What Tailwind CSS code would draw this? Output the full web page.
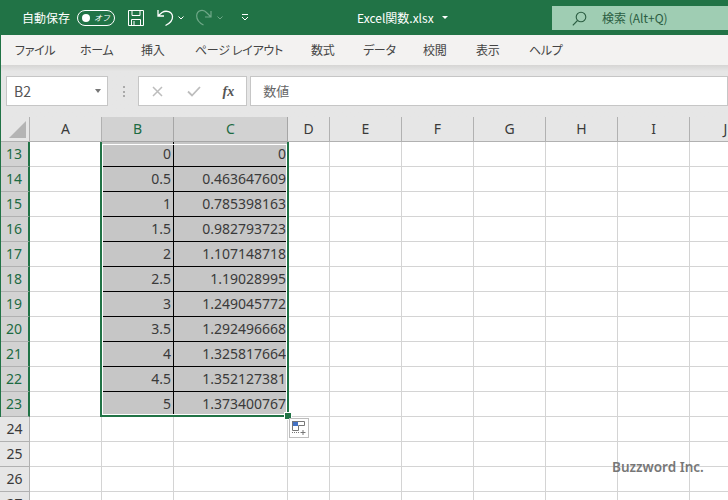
<!DOCTYPE html>
<html lang="ja">
<head>
<meta charset="UTF-8">
<title>Excel関数.xlsx</title>
<script src="https://cdn.jsdelivr.net/npm/@tailwindcss/browser@4"></script>
</head>
<body class="w-[728px] h-[500px] overflow-hidden bg-white font-['Noto_Sans_CJK_JP','Noto_Sans',sans-serif] text-[#444]">

<!-- title bar -->
<header class="h-[35px] bg-[#217346] text-white flex items-center relative">
  <span class="ml-[22px] text-[12px] w-[50px] whitespace-nowrap">自動保存</span>
  <div class="ml-[5px] w-[38px] h-[16px] rounded-full border border-white flex items-center pl-[4px] gap-[4px]">
    <span class="w-[8px] h-[8px] rounded-full bg-white"></span>
    <span class="text-[8px] italic leading-none">オフ</span>
  </div>
  <svg class="ml-[13px]" width="16" height="16" viewBox="0 0 16 16" fill="none" stroke="white" stroke-width="1"><path d="M.5.5h15v15H.5zM4 .5v5h8v-5M3.5 15.5v-6h9v6M6 11v4"/></svg>
  <svg class="ml-[13px]" width="17" height="18" viewBox="0 0 17 18" fill="none" stroke="white" stroke-width="1.3"><path d="M1 1v6h6M1.5 6.5 5 3.500c4-2.500 10-1 10.500 4 .3 4-3 7-7 9"/></svg>
  <svg class="ml-[4px]" width="6" height="4" viewBox="0 0 6 4" fill="none" stroke="white"><path d="M.5.5 3 3 5.500.5"/></svg>
  <svg class="ml-[12px]" width="16" height="18" viewBox="0 0 16 18" fill="none" stroke="#6fa888" stroke-width="1.200"><path d="M15 2v6h-6M14.500 7.500 11 4C7-.5 1 1.500.7 6.500c-.2 4 3 7.500 6.800 9.500"/></svg>
  <svg class="ml-[5px]" width="6" height="4" viewBox="0 0 6 4" fill="none" stroke="#6fa888"><path d="M.5.5 3 3 5.500.5"/></svg>
  <svg class="ml-[18px]" width="8" height="7" viewBox="0 0 8 7" fill="none" stroke="white"><path d="M1 .5h6M1 3l3 3 3-3"/></svg>
  <div class="absolute left-[357px] top-[9px] text-[12px] leading-[17px] whitespace-nowrap flex items-center">Excel関数.xlsx<span class="ml-[8px] border-x-[3px] border-x-transparent border-t-[3px] border-t-white"></span></div>
  <div class="absolute left-[552px] top-[6px] w-[176px] h-[24px] bg-[#9fcdb3] flex items-center text-[#2b5d42] text-[12px]">
    <svg class="ml-[20px]" width="15" height="15" viewBox="0 0 15 15" fill="none" stroke="#2b5d42" stroke-width="1.100"><circle cx="9" cy="6" r="4.800"/><path d="M5.500 9.500 .8 14.300"/></svg>
    <span class="ml-[15px] whitespace-nowrap">検索 (Alt+Q)</span>
  </div>
</header>

<!-- ribbon tabs -->
<nav class="h-[30px] bg-[#f3f2f1] flex items-center text-[12px] text-[#444] whitespace-nowrap tracking-[-0.3px] [font-feature-settings:'palt']">
  <span class="ml-[15px] w-[65px]">ファイル</span>
  <span class="w-[61px]">ホーム</span>
  <span class="w-[54px]">挿入</span>
  <span class="w-[116px]">ページ レイアウト</span>
  <span class="w-[52px]">数式</span>
  <span class="w-[60px]">データ</span>
  <span class="w-[53px]">校閲</span>
  <span class="w-[53px]">表示</span>
  <span>ヘルプ</span>
</nav>

<!-- formula bar -->
<section class="h-[52px] bg-gradient-to-b from-[#d6d5d4] from-0% via-[#e6e6e6] via-[12%] to-[#e6e6e6] flex items-start pt-[11px]">
  <div class="ml-[6px] w-[102px] h-[30px] bg-white border border-[#c6c6c6] flex items-center justify-between pl-[7px] pr-[6px] text-[14px] text-[#555]">
    <span>B2</span>
    <span class="border-x-[3.500px] border-x-transparent border-t-[4px] border-t-[#777]"></span>
  </div>
  <div class="ml-[15px] w-[2px] h-[11px] mt-[10px] border-l-2 border-dotted border-[#aaa]"></div>
  <div class="ml-[13px] w-[110px] h-[30px] bg-white border border-[#c6c6c6] flex items-center">
    <svg class="ml-[13px]" width="11" height="11" viewBox="0 0 11 11" fill="none" stroke="#bdbdbd" stroke-width="1.500"><path d="M1 1l9 9M10 1l-9 9"/></svg>
    <svg class="ml-[24px]" width="14" height="11" viewBox="0 0 14 11" fill="none" stroke="#bdbdbd" stroke-width="1.800"><path d="M1 5.500 5 9.500 13 1"/></svg>
    <span class="ml-[22px] text-[14px] italic font-bold font-['Liberation_Serif',serif] text-[#555]">fx</span>
  </div>
  <div class="ml-[3px] w-[480px] h-[30px] bg-white border border-[#c6c6c6] flex items-center pl-[12px] text-[13px] text-[#666]">数値</div>
</section>

<!-- sheet -->
<main id="sheet" class="text-[14px] leading-none font-['Noto_Sans','Liberation_Sans',sans-serif]"></main>

<span class="absolute left-[612px] top-[457px] text-[13.500px] font-semibold text-[#777] font-['Noto_Sans',sans-serif]">Buzzword Inc.</span>

<script>
  const widths = [72, 72, 114, 42, 72, 72, 72, 72, 72, 72];
  const names = 'ABCDEFGHIJ'.split('');
  const values = [[0, 0], [0.5, 0.463647609], [1, 0.785398163], [1.5, 0.982793723], [2, 1.107148718], [2.5, 1.19028995],
    [3, 1.249045772], [3.5, 1.292496668], [4, 1.325817664], [4.5, 1.352127381], [5, 1.373400767]];
  const sheet = document.getElementById('sheet');
  let html = '<div class="flex h-[25px]"><div class="w-[30px] shrink-0 bg-[#e6e6e6] border-r border-b border-[#b1b1b1] flex items-end justify-end pr-[3px] pb-[3px]"><svg width="17" height="17" viewBox="0 0 17 17"><path d="M17 0V17H0z" fill="#b4b4b4"/></svg></div>';
  names.forEach((n, i) => {
    const sel = i == 1 || i == 2;
    html += `<div class="shrink-0 flex items-center justify-center border-r border-b ${sel ? 'bg-[#d2d2d2] text-[#1d6b43] border-[#a6a6a6]' : 'bg-[#e6e6e6] text-[#3a3a3a] border-[#b1b1b1]'}" style="width:${widths[i]}px">${n}</div>`;
  });
  html += '</div>';
  for (let r = 13; r <= 27; r++) {
    const sel = r <= 23;
    html += `<div class="flex h-[25px] relative"><div class="w-[30px] shrink-0 flex items-center justify-center border-b ${sel ? 'bg-[#d2d2d2] text-[#1d6b43] border-b-[#b1b1b1] border-r-2 border-r-[#217346]' : 'bg-[#e6e6e6] text-[#3a3a3a] border-[#b1b1b1] border-r'}">${r}</div>`;
    widths.forEach((w, i) => {
      if (sel && (i == 1 || i == 2)) {
        const v = values[r - 13][i - 1];
        html += `<div class="shrink-0 flex items-center justify-end pr-[2px] bg-[#c6c6c6] text-[#3a3a3a] border-b border-b-black ${i == 1 ? 'border-r border-r-black' : ''}" style="width:${w}px">${v}</div>`;
      } else {
        html += `<div class="shrink-0 border-r border-b border-[#d4d4d4]" style="width:${w}px"></div>`;
      }
    });
    html += '</div>';
  }
  sheet.innerHTML = html;
</script>

<!-- window edge, selection frame and quick analysis button sit over the grid -->
<div class="absolute left-0 top-[35px] w-px h-[382px] bg-[#217346]"></div>
<div class="absolute left-[100px] top-[142px] w-[189px] h-[275px] border-2 border-t-0 border-[#217346] outline outline-white -outline-offset-3"></div>
<div class="absolute left-[284px] top-[412px] w-[6px] h-[6px] bg-[#217346] border border-white box-content"></div>
<div class="absolute left-[289px] top-[418px] w-[20px] h-[20px] bg-white border border-[#bdbdbd]">
  <svg class="block" width="18" height="18" viewBox="0 0 18 18"><rect x="2" y="2" width="6" height="5" fill="#4472c4"/><path d="M2.500 2.500h12v4h-6v5h-6z" fill="none" stroke="#777"/><path d="M2 13.500h8" stroke="#777" stroke-dasharray="1 1"/><path d="M10.500 13.500h5M13 11v5" stroke="#777"/></svg>
</div>
</body>
</html>
